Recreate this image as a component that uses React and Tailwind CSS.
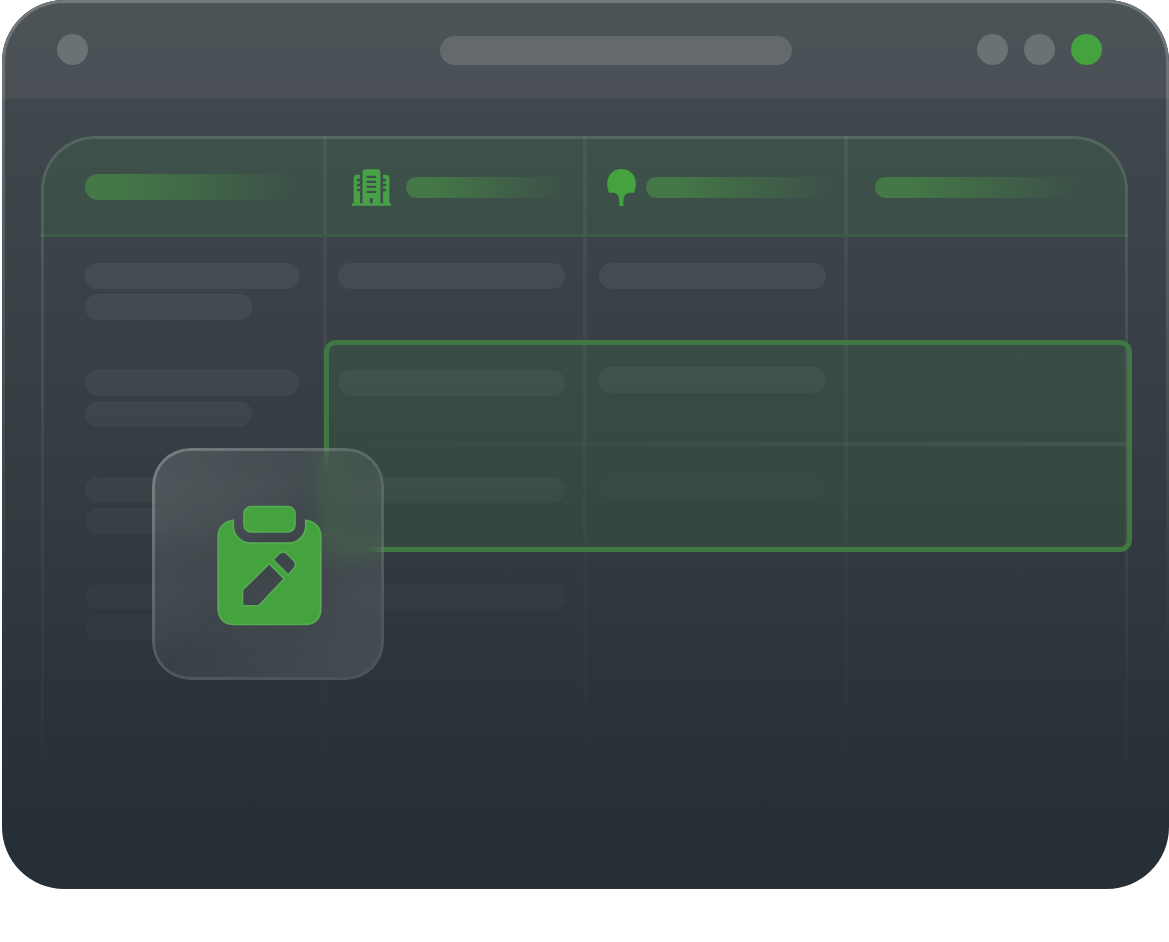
import React from "react";

const columns = "grid grid-cols-[286fr_261fr_261fr_280fr]";
const divider = "border-r-4 border-white/5";

function BuildingIcon() {
  return (
    <svg viewBox="64 117 118 111" className="h-[37px] w-[39px] shrink-0" fill="#48a146" aria-hidden="true">
      <path d="M66 220H180Q182 220 182 222V228H64V222Q64 220 66 220Z" />
      <path
        fillRule="evenodd"
        d="M105 117H141Q150 117 150 127V222H96V127Q96 117 105 117Z
           M109 137Q106 140.500 109 144H136Q140 140.500 136 137Z
           M109 152Q106 155.500 109 159H136Q140 155.500 136 152Z
           M109 167Q106 170.500 109 174H136Q140 170.500 136 167Z
           M109 182Q106 185.500 109 189H136Q140 185.500 136 182Z
           M118 220V207Q122.500 201 127 207V220Z"
      />
      <path d="M88 134H79Q69 135 69 144V222H88V184H80Q76 180 80 176H88V169H80Q76 165 80 161H88V154H80Q76 150 80 146H88Z" />
      <path d="M158 134H167Q177 135 177 144V222H158V184H166Q170 180 166 176H158V169H166Q170 165 166 161H158V154H166Q170 150 166 146H158Z" />
    </svg>
  );
}

function TreeIcon() {
  return (
    <svg viewBox="831 117 86 111" className="h-[37px] w-[29px] shrink-0" fill="#44a23f" aria-hidden="true">
      <path d="M831 161C831 135 849 117 874 117C899 117 917 135 917 161C917 172 915 181 911 189C893 186 880 192 880 211V228H867V211C867 192 855 186 837 189C833 181 831 172 831 161Z" />
    </svg>
  );
}

function ClipboardEditIcon() {
  return (
    <svg
      viewBox="230 224 317 363"
      className="h-[121px] w-[105px]"
      fill="#44a23f"
      stroke="#58ab54"
      strokeWidth="5"
      aria-hidden="true"
    >
      <rect x="311.500" y="227.500" width="154" height="77" rx="22" />
      <path
        fillRule="evenodd"
        d="M279 269C251 272 233.500 291 233.500 320V532C233.500 565 251 583.500 284 583.500H494C527 583.500 543.500 565 543.500 532V320C543.500 291 526 272 498 269V284C498 315 474 338 443 338H334C303 338 279 315 279 284Z
           M388 400L433 446L356 527H307V479Z
           M399 388L417 370Q429 359 441 370L462 391Q473 403 462 415L445 434Z"
      />
    </svg>
  );
}

function Dot({ className = "bg-[#6b7275]" }) {
  return <span className={`size-[31px] shrink-0 rounded-full ${className}`} />;
}

function Pill({ className = "w-[227px]" }) {
  return <div className={`h-[26px] max-w-full rounded-full bg-white/6 ${className}`} />;
}

function HeadingBar({ className }) {
  return (
    <div
      className={`rounded-l-full bg-linear-to-r from-[#447846] from-15% to-[#447846]/0 ${className}`}
    />
  );
}

function TitleBar() {
  return (
    <header className="flex h-[99px] items-center bg-linear-to-b from-[#4d5558] to-[#494f55] pr-[67px] pl-[55px]">
      <Dot />
      <div className="flex-[352]" />
      <div className="mt-0.5 h-[29px] w-[352px] rounded-full bg-[#64696e]" />
      <div className="flex-[185]" />
      <div className="flex gap-4">
        <Dot />
        <Dot />
        <Dot className="bg-[#44a23f]" />
      </div>
    </header>
  );
}

function TableHead() {
  return (
    <div
      className={`${columns} h-[101px] rounded-t-[54px] border-b-[3px] border-[#45a042]/15 bg-[#45a042]/12`}
    >
      <div className={`flex items-center pt-1 pl-11 ${divider}`}>
        <HeadingBar className="h-[26px] w-[214px]" />
      </div>
      <div className={`flex items-center gap-[15px] pt-1 pl-[25px] ${divider}`}>
        <BuildingIcon />
        <HeadingBar className="h-[21px] w-40" />
      </div>
      <div className={`flex items-center gap-[10px] pt-1 pl-5 ${divider}`}>
        <TreeIcon />
        <HeadingBar className="h-[21px] w-[188px]" />
      </div>
      <div className="flex items-center pt-1 pl-[27px]">
        <HeadingBar className="h-[21px] w-[206px]" />
      </div>
    </div>
  );
}

function PillPair() {
  return (
    <div className="flex flex-col gap-[5px]">
      <Pill className="w-[214px]" />
      <Pill className="w-[167px]" />
    </div>
  );
}

function TableBody() {
  return (
    <div
      className={`${columns} h-[583px] [mask-image:linear-gradient(180deg,#000_0%,rgba(0,0,0,0.4)_60%,transparent_100%)]`}
    >
      <div className={`flex flex-col gap-[50px] pt-[26px] pl-11 ${divider}`}>
        <PillPair />
        <PillPair />
        <PillPair />
        <PillPair />
      </div>
      <div className={`flex flex-col gap-[81px] pt-[26px] pl-[11px] ${divider}`}>
        <Pill />
        <Pill />
        <Pill />
        <Pill />
      </div>
      <div className={`flex flex-col gap-[78px] pt-[26px] pl-3 ${divider}`}>
        <Pill />
        <Pill />
        <Pill className="mt-[3px] w-[227px] opacity-30" />
      </div>
      <div />
    </div>
  );
}

function Selection() {
  return (
    <div className="absolute top-[204px] -right-1 left-[26%] flex h-[212px] flex-col rounded-xl border-5 border-[#3f7843] bg-[#45a042]/13">
      <div className="flex-1" />
      <div className="mb-[101px] h-1 bg-linear-to-r from-white/0 to-white/6" />
    </div>
  );
}

function FloatingCard() {
  return (
    <div className="absolute top-[448px] left-[150px] flex size-[232px] items-center justify-center rounded-[38px] bg-linear-135 from-white/13 via-white/6 to-white/12 pt-0.5 pl-0.5 backdrop-blur-md">
      <div className="absolute inset-0 rounded-[38px] bg-linear-135 from-white/25 via-white/12 to-white/4 p-[3px] [mask:linear-gradient(#000_0_0)_content-box_exclude,linear-gradient(#000_0_0)]" />
      <ClipboardEditIcon />
    </div>
  );
}

export default function App() {
  return (
    <main className="min-h-screen bg-white pl-0.5 font-['Liberation_Sans',sans-serif]">
      <section className="relative overflow-hidden rounded-[62px] bg-linear-to-b from-[#424b50] via-[#333b40] via-58% to-[#262e36] to-95%">
        <TitleBar />
        <div className="pt-[37px] pr-[41px] pb-[69px] pl-[39px]">
          <div className="relative">
            <TableHead />
            <TableBody />
            <div className="pointer-events-none absolute inset-0 rounded-t-[54px] border-3 border-b-0 border-white/12 [mask-image:linear-gradient(180deg,#000_0%,transparent_100%)]" />
            <Selection />
          </div>
        </div>
        <FloatingCard />
        <div className="pointer-events-none absolute inset-0 rounded-[62px] border-3 border-white/22 [mask-image:linear-gradient(180deg,#000_0%,transparent_75%)]" />
      </section>
    </main>
  );
}
